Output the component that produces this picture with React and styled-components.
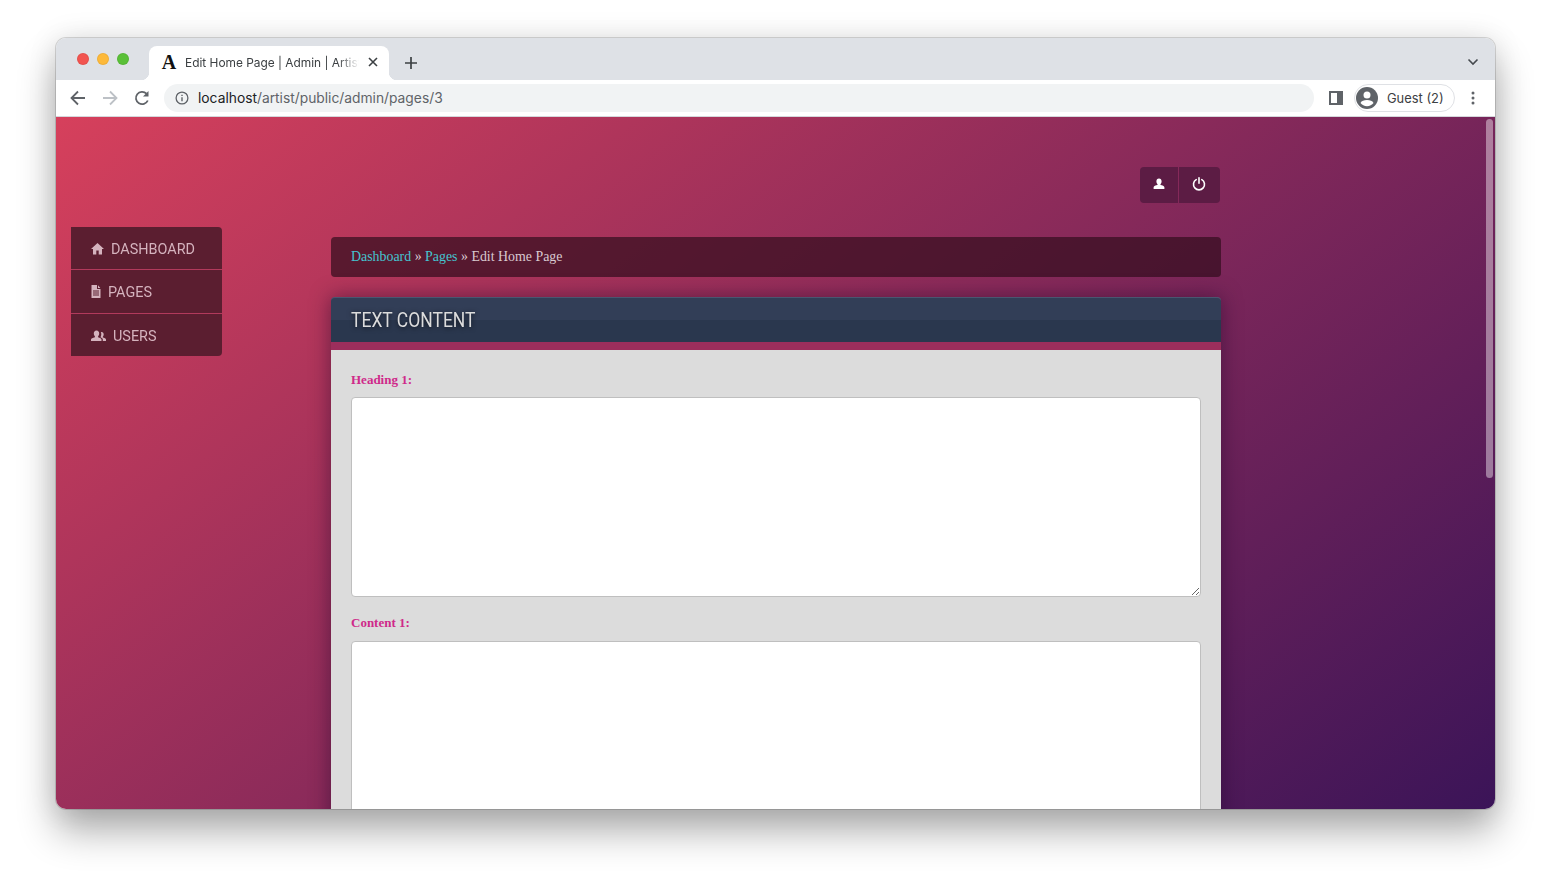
import React from "react";
import styled, { createGlobalStyle } from "styled-components";

const Global = createGlobalStyle`
html, body {
  margin: 0;
  padding: 0;
  background: #fff;
  overflow: hidden;
}
* { box-sizing: border-box; }
`

const Desktop = styled.div`
width: 1551px;
height: 883px;
padding: 38px 56px 74px;
background: #fff;
`

const BrowserWindow = styled.div`
width: 1439px;
height: 771px;
border-radius: 10px;
overflow: hidden;
display: flex;
flex-direction: column;
box-shadow: 0 0 0 1px rgba(0,0,0,.14), 0 22px 38px rgba(0,0,0,.32), 0 0 30px rgba(0,0,0,.1);
font-family: Inter, "Noto Sans", sans-serif;
`

const TabStrip = styled.div`
height: 42px;
flex: none;
background: #dee1e6;
display: flex;
align-items: flex-end;
padding-left: 21px;
`

const Lights = styled.div`
display: flex;
gap: 8px;
align-self: flex-start;
margin-top: 15px;
`

const Light = styled.span`
width: 12px;
height: 12px;
border-radius: 50%;
background: ${({ color }) => color};
box-shadow: inset 0 0 0 1px rgba(0,0,0,.06);
`

const Tab = styled.div`
position: relative;
width: 240px;
height: 34px;
margin-left: 20px;
background: #fff;
border-radius: 8px 8px 0 0;
display: flex;
align-items: center;
padding: 0 11px 2px 12px;
&::before, &::after {
  content: "";
  position: absolute;
  bottom: 0;
  width: 8px;
  height: 8px;
}
&::before {
  left: -8px;
  background: radial-gradient(circle at 0 0, transparent 8px, #fff 8.5px);
}
&::after {
  right: -8px;
  background: radial-gradient(circle at 100% 0, transparent 8px, #fff 8.5px);
}
`

const Favicon = styled.span`
width: 16px;
font: 700 20px/16px "Liberation Serif", serif;
color: #111;
text-align: center;
margin-right: 8px;
`

const TabTitle = styled.span`
flex: 1;
font-size: 11.9px;
color: #3c4043;
white-space: nowrap;
overflow: hidden;
-webkit-mask-image: linear-gradient(to right, #000 88%, transparent 100%);
mask-image: linear-gradient(to right, #000 88%, transparent 100%);
`

const TabClose = styled.svg`
width: 10px;
height: 10px;
margin-left: 9px;
flex: none;
`

const NewTab = styled.svg`
width: 14px;
height: 14px;
margin: 0 0 10px 15px;
`

const TabChevron = styled.svg`
width: 12px;
height: 8px;
margin: 0 16px 14px auto;
`

const Toolbar = styled.div`
height: 37px;
flex: none;
background: #fff;
border-bottom: 1px solid #d5d7db;
display: flex;
align-items: center;
padding: 0 0 1px 13px;
`

const NavIcon = styled.svg`
width: 18px;
height: 18px;
margin-right: 14px;
flex: none;
`

const AddressBar = styled.div`
width: 1150px;
height: 28px;
margin-left: -1px;
border-radius: 14px;
background: #f1f3f4;
display: flex;
align-items: center;
padding-left: 11px;
font-size: 13.8px;
color: #5f6368;
`

const InfoIcon = styled.svg`
width: 14px;
height: 14px;
margin-right: 9px;
`

const Host = styled.span`
color: #202124;
`

const PanelIcon = styled.svg`
width: 14px;
height: 14px;
margin-left: 15px;
`

const Profile = styled.div`
width: 101px;
height: 28px;
margin-left: 11px;
border: 1px solid #dfe1e5;
border-radius: 14px;
display: flex;
align-items: center;
padding-left: 1px;
font-size: 12.9px;
color: #3c4043;
`

const ProfileName = styled.span`
padding-top: 1px;
`

const Avatar = styled.svg`
width: 22px;
height: 22px;
margin-right: 9px;
`

const MenuDots = styled.svg`
width: 4px;
height: 14px;
margin-left: 16px;
`

const Viewport = styled.div`
position: relative;
flex: 1;
overflow: hidden;
background: linear-gradient(142deg, #d6405c 0%, #3b1458 100%);
display: grid;
grid-template-columns: 151px 890px;
column-gap: 109px;
align-items: start;
padding-left: 15px;
`

const ScrollThumb = styled.div`
position: absolute;
top: 2px;
right: 2px;
width: 7px;
height: 359px;
border-radius: 4px;
background: rgba(255,255,255,.42);
`

const SideMenu = styled.ul`
list-style: none;
margin: 110px 0 0;
padding: 0;
border-radius: 0 4px 4px 0;
overflow: hidden;
background: #5b1e30;
`

const MenuItem = styled.li`
height: ${({ h }) => h}px;
display: flex;
align-items: center;
gap: ${({ gap }) => gap}px;
padding-left: 20px;
color: #d5b3be;
font: 15px Roboto, sans-serif;
border-bottom: ${({ last }) => (last ? "none" : "1px solid #b23a5c")};
`

const MenuLabel = styled.span`
display: inline-block;
transform: scaleX(.96);
transform-origin: left center;
padding-top: 1px;
`

const MenuIcon = styled.svg`
width: ${({ w }) => w || 13}px;
height: 13px;
fill: #d5b3be;
flex: none;
`

const Main = styled.div`
padding-top: 50px;
`

const TopActions = styled.div`
display: flex;
justify-content: flex-end;
margin-right: 1px;
`

const ActionGroup = styled.div`
display: flex;
gap: 1px;
border-radius: 4px;
overflow: hidden;
`

const ActionButton = styled.button`
width: ${({ w }) => w}px;
height: 36px;
border: none;
padding: 0 1px 2px 0;
background: #5c1c44;
display: flex;
align-items: center;
justify-content: center;
`

const Breadcrumb = styled.div`
height: 40px;
margin-top: 34px;
padding-left: 20px;
border-radius: 4px;
background: rgba(52,14,30,.72);
color: #d9c9cf;
font: 13.9px/40px "Liberation Serif", serif;
`

const Crumb = styled.a`
color: #45c4cf;
`

const Card = styled.section`
margin-top: 20px;
background: #9c2e5c;
border-radius: 4px 4px 0 0;
box-shadow: 0 0 20px rgba(30,5,40,.5);
`

const CardHeader = styled.div`
height: 45px;
padding-left: 20px;
display: flex;
align-items: center;
border-radius: 4px 4px 0 0;
border-top: 1px solid #4a5670;
background: linear-gradient(#323e57 50%, #2a374e 50%);
`

const CardTitle = styled.h2`
margin: 0;
color: #dcdcdc;
font: 400 20px Roboto, sans-serif;
transform: scaleX(.875);
transform-origin: left center;
text-shadow: 0 1px 6px rgba(0,0,0,.7);
`

const CardBody = styled.div`
margin-top: 8px;
padding: 20px 20px 40px;
background: #dcdcdc;
`

const FieldLabel = styled.label`
display: block;
height: 20px;
margin-bottom: ${({ mb }) => mb}px;
font: 700 13px/20px "Liberation Serif", serif;
color: #cf2a8a;
`

const Area = styled.textarea`
display: block;
width: 100%;
height: 200px;
margin: 0 0 16px;
background: #fff;
border: 1px solid #bfbfbf;
border-radius: 4px;
`

const Menu = [
  { label: "DASHBOARD", h: 43, gap: 7, icon: <path d="M6.500 1 0 7h2v5.500h3.300V8.500h2.400v4H11V7h2z" /> },
  { label: "PAGES", h: 44, gap: 6, w: 11, icon: <path fillRule="evenodd" d="M.5 0H6v4h3.500v9h-9zM7 .3 9.300 3H7zM2 5.500V6.500h6V5.500zM2 7.500V8.500h6V7.500zM2 9.500V10.500h6V9.500z" /> },
  { label: "USERS", h: 42, gap: 7, w: 15, icon: <path d="M5.500 1.500c1.800 0 2.700 1.400 2.700 3 0 1.200-.5 2.200-1.100 2.800v1c1.800.5 3.400 1.300 3.400 2.200V12H0v-1.500c0-.9 1.800-1.800 3.900-2.200v-1C3.300 6.700 2.800 5.700 2.800 4.500c0-1.600.9-3 2.700-3zM10.500 3c1.500 0 2.200 1.200 2.200 2.500 0 1-.4 1.800-.9 2.300v.8c1.500.4 3.200 1 3.200 2V12h-3.200v-1.700c0-.8-.9-1.500-2.300-2 .5-.9.800-2 .8-3 0-.9-.2-1.600-.5-2.200.2 0 .4-.1.700-.1z" /> },
];

const App = () => {
  return (
    <Desktop>
      <Global />
      <BrowserWindow>
        <TabStrip>
          <Lights>
            <Light color="#f25450" />
            <Light color="#fdb93a" />
            <Light color="#5ac038" />
          </Lights>
          <Tab>
            <Favicon>A</Favicon>
            <TabTitle>Edit Home Page | Admin | Artist</TabTitle>
            <TabClose viewBox="0 0 10 10"><path d="M1 1l8 8M9 1l-8 8" stroke="#3c4043" strokeWidth="1.600" /></TabClose>
          </Tab>
          <NewTab viewBox="0 0 14 14"><path d="M7 1v12M1 7h12" stroke="#3c4043" strokeWidth="1.700" /></NewTab>
          <TabChevron viewBox="0 0 12 8"><path d="M1.500 1.500 6 6l4.500-4.500" fill="none" stroke="#45494e" strokeWidth="1.600" /></TabChevron>
        </TabStrip>
        <Toolbar>
          <NavIcon viewBox="0 0 18 18"><path d="M16 9H3M9 2.500 2.500 9 9 15.500" fill="none" stroke="#5f6368" strokeWidth="1.800" /></NavIcon>
          <NavIcon viewBox="0 0 18 18"><path d="M2 9h13M9 2.500 15.500 9 9 15.500" fill="none" stroke="#bdc1c6" strokeWidth="1.800" /></NavIcon>
          <NavIcon viewBox="0 0 18 18"><path d="M14.800 11.500A6.200 6.200 0 1 1 13.500 4.600" fill="none" stroke="#5f6368" strokeWidth="1.800" /><path d="M15.500 2v5.500H10z" fill="#5f6368" /></NavIcon>
          <AddressBar>
            <InfoIcon viewBox="0 0 14 14"><circle cx="7" cy="7" r="5.900" fill="none" stroke="#5f6368" strokeWidth="1.300" /><path d="M7 6.200v4M7 3.700v1.300" stroke="#5f6368" strokeWidth="1.400" /></InfoIcon>
            <span><Host>localhost</Host>/artist/public/admin/pages/3</span>
          </AddressBar>
          <PanelIcon viewBox="0 0 14 14"><path fillRule="evenodd" d="M0 0h14v14H0zM2 2v10h6V2z" fill="#5f6368" /></PanelIcon>
          <Profile>
            <Avatar viewBox="0 0 22 22">
              <circle cx="11" cy="11" r="11" fill="#5f6368" />
              <circle cx="11" cy="8" r="3.500" fill="#fff" />
              <path d="M4.500 16c1-2.200 3.500-3 6.500-3s5.500.8 6.500 3c-1.500 2-3.800 3.200-6.500 3.200S6 18 4.500 16z" fill="#fff" />
            </Avatar>
            <ProfileName>Guest (2)</ProfileName>
          </Profile>
          <MenuDots viewBox="0 0 4 14"><circle cx="2" cy="2" r="1.500" fill="#5f6368" /><circle cx="2" cy="7" r="1.500" fill="#5f6368" /><circle cx="2" cy="12" r="1.500" fill="#5f6368" /></MenuDots>
        </Toolbar>
        <Viewport>
          <SideMenu>
            {Menu.map((el, i) => (
              <MenuItem key={el.label} h={el.h} gap={el.gap} last={i === Menu.length - 1}>
                <MenuIcon viewBox={`0 0 ${el.w || 13} 13`} w={el.w}>{el.icon}</MenuIcon>
                <MenuLabel>{el.label}</MenuLabel>
              </MenuItem>
            ))}
          </SideMenu>
          <Main>
            <TopActions>
              <ActionGroup>
                <ActionButton w={38}>
                  <svg width="12" height="12" viewBox="0 0 12 12"><path fill="#fff" d="M6 .5c1.700 0 2.600 1.300 2.600 2.900 0 1.100-.5 2.100-1.100 2.700v1c1.800.4 3.900 1.100 3.900 2.200V11H.6V9.300c0-1.100 2.100-1.800 3.900-2.200v-1C3.900 5.500 3.400 4.500 3.400 3.400 3.400 1.800 4.300.5 6 .5z" /></svg>
                </ActionButton>
                <ActionButton w={41}>
                  <svg width="14" height="14" viewBox="0 0 14 14"><path d="M4.200 2.600a5.500 5.500 0 1 0 5.600 0M7 .8v5.400" fill="none" stroke="#fff" strokeWidth="1.600" strokeLinecap="round" /></svg>
                </ActionButton>
              </ActionGroup>
            </TopActions>
            <Breadcrumb>
              <Crumb>Dashboard</Crumb> » <Crumb>Pages</Crumb> » Edit Home Page
            </Breadcrumb>
            <Card>
              <CardHeader><CardTitle>TEXT CONTENT</CardTitle></CardHeader>
              <CardBody>
                <FieldLabel mb={7}>Heading 1:</FieldLabel>
                <Area />
                <FieldLabel mb={8}>Content 1:</FieldLabel>
                <Area />
              </CardBody>
            </Card>
          </Main>
          <ScrollThumb />
        </Viewport>
      </BrowserWindow>
    </Desktop>
  );
};

export default App;
